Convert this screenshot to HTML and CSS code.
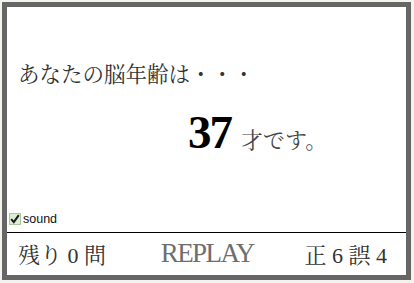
FILE: index.html
```html
<!DOCTYPE html>
<html lang="ja">
<head>
<meta charset="utf-8">
<link rel="stylesheet" href="styles.css">
</head>
<body>
<div class="frame">
  <div class="main">
    <div class="question">あなたの脳年齢は・・・</div>
    <div class="age"><span class="num">37</span><span class="unit">才です。</span></div>
    <label class="sound">
      <span class="check"><svg width="10" height="10" viewBox="0 0 10 10"><path d="M1.2 5.2 L3.8 8.2 L8.8 1.2" fill="none" stroke="#1a1a1a" stroke-width="2"/></svg></span>
      <span class="sound-text">sound</span>
    </label>
  </div>
  <div class="bar">
    <div class="remain">残り 0 問</div>
    <div class="replay">REPLAY</div>
    <div class="score">正 6 誤 4</div>
  </div>
</div>
</body>
</html>
```

FILE: styles.css
```css
html, body {
  margin: 0;
  padding: 0;
  background: #f4f3ee;
}
.frame {
  margin: 2px;
  width: 399px;
  height: 268px;
  border: 5px solid #666;
  background: #fff;
  display: flex;
  flex-direction: column;
  font-family: "Liberation Serif", "Noto Serif CJK JP", "Noto Sans CJK JP", serif;
}
.main {
  height: 225px;
  display: flex;
  flex-direction: column;
  border-bottom: 1px solid #000;
}
.question {
  margin-top: 53px;
  padding-left: 11px;
  font-size: 21.5px;
  line-height: 30px;
  color: #333;
  white-space: nowrap;
}
.age {
  margin-top: 22px;
  padding-left: 181px;
  line-height: 40px;
  height: 40px;
  white-space: nowrap;
}
.num {
  font-size: 47px;
  font-weight: bold;
  color: #000;
  letter-spacing: -2px;
  margin-right: 10px;
}
.unit {
  font-size: 22px;
  color: #444;
}
.sound {
  margin-top: auto;
  margin-bottom: 6px;
  margin-left: 2px;
  display: flex;
  align-items: center;
  gap: 2px;
  width: 64px;
  height: 14px;
}
.check {
  width: 10px;
  height: 10px;
  border: 1px solid #a8c89a;
  background: #dbedd2;
  display: flex;
  align-items: center;
  justify-content: center;
}
.sound-text {
  font-family: "Liberation Sans", Arial, sans-serif;
  font-size: 12.5px;
  color: #111;
}
.bar {
  flex: 1;
  display: flex;
  align-items: center;
  justify-content: space-between;
  padding: 0 19px 2px 11px;
  font-size: 22px;
  color: #333;
  white-space: nowrap;
}
.replay {
  color: #6e6e6e;
  font-size: 27px;
  letter-spacing: -1.6px;
  margin-left: 4px;
}
```
